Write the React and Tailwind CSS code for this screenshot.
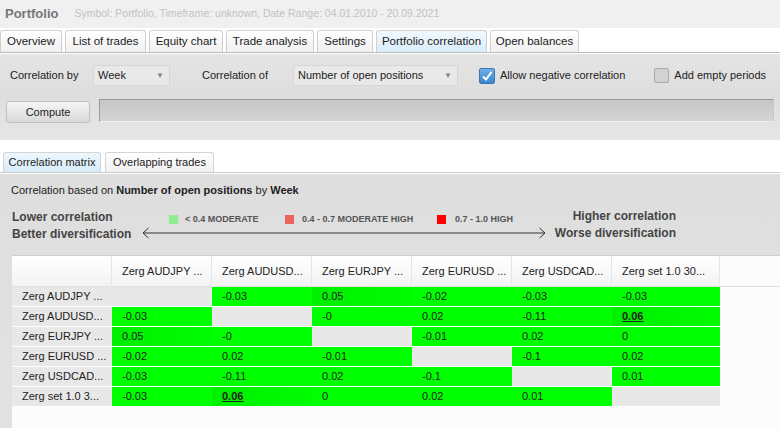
import React from 'react';

const topTabs = [
  { t: 'Overview', w: 'w-[62px]' },
  { t: 'List of trades', w: 'w-[81px]' },
  { t: 'Equity chart', w: 'w-[74px]' },
  { t: 'Trade analysis', w: 'w-[88px]' },
  { t: 'Settings', w: 'w-[56px]' },
  { t: 'Portfolio correlation', w: 'w-[111px]', active: true },
  { t: 'Open balances', w: 'w-[89px]' },
];
const names = ['Zerg AUDJPY ...', 'Zerg AUDUSD...', 'Zerg EURJPY ...', 'Zerg EURUSD ...', 'Zerg USDCAD...', 'Zerg set 1.0 30...'];
const rowNames = ['Zerg AUDJPY ...', 'Zerg AUDUSD...', 'Zerg EURJPY ...', 'Zerg EURUSD ...', 'Zerg USDCAD...', 'Zerg set 1.0 3...'];
const widths = ['w-[100px]', 'w-[100px]', 'w-[100px]', 'w-[100px]', 'w-[100px]', 'w-[108px]'];

// null = diagonal, strong = bold underlined, dim = slightly darker green
const matrix = [
  [null, { v: '-0.03' }, { v: '0.05', dim: true }, { v: '-0.02' }, { v: '-0.03' }, { v: '-0.03' }],
  [{ v: '-0.03' }, null, { v: '-0' }, { v: '0.02' }, { v: '-0.11' }, { v: '0.06', strong: true, dim: true }],
  [{ v: '0.05', dim: true }, { v: '-0' }, null, { v: '-0.01' }, { v: '0.02' }, { v: '0' }],
  [{ v: '-0.02' }, { v: '0.02' }, { v: '-0.01' }, null, { v: '-0.1' }, { v: '0.02' }],
  [{ v: '-0.03' }, { v: '-0.11' }, { v: '0.02' }, { v: '-0.1' }, null, { v: '0.01' }],
  [{ v: '-0.03' }, { v: '0.06', strong: true, dim: true }, { v: '0' }, { v: '0.02' }, { v: '0.01' }, null],
];

const Select = ({ value, width }) => (
  <div className={`${width} h-[21px] flex items-center justify-between pl-[4px] pr-[5px] bg-[#e9e9e9] border border-[#d6d6d6] text-[#222]`}>
    <span>{value}</span>
    <span className="text-[8px] text-[#888]">▼</span>
  </div>
);

const App = () => (
  <div className="w-[780px] h-[429px] overflow-hidden bg-white text-[11px] text-[#222]" style={{ fontFamily: '"Liberation Sans", Arial, sans-serif' }}>
    {/* Title */}
    <div className="h-[28px] bg-[#f0f0f0] flex items-center px-[5px] gap-[16px]">
      <span className="text-[13px] font-bold text-[#777]">Portfolio</span>
      <span className="text-[10.5px] text-[#c2c2c2]">Symbol: Portfolio, Timeframe: unknown, Date Range: 04.01.2010 - 20.09.2021</span>
    </div>

    {/* Main tabs */}
    <div className="h-[25px] flex items-end gap-[3px] border-b border-[#b8b8b8] bg-white">
      {topTabs.map(({ t, w, active }) => (
        <div key={t} className={`${w} h-[22px] flex items-center justify-center rounded-t-[3px] border border-b-0 border-[#cfcfcf] text-[11.5px] ${active ? 'bg-gradient-to-b from-[#f2f9fe] to-[#d9edfa]' : 'bg-gradient-to-b from-white to-[#f0f0f0]'} text-[#222]`}>
          {t}
        </div>
      ))}
    </div>

    {/* Controls */}
    <div className="h-[87px] bg-gradient-to-b from-[#e4e4e4] via-[#dedede] to-[#e6e6e6] border-t border-white px-[6px] pt-[11px]">
      <div className="flex items-center h-[21px]">
        <span className="w-[87px] pl-[4px]">Correlation by</span>
        <Select value="Week" width="w-[77px]" />
        <span className="ml-[32px] w-[91px]">Correlation of</span>
        <Select value="Number of open positions" width="w-[165px]" />
        <div className="ml-[21px] w-[16px] h-[16px] rounded-[2px] bg-gradient-to-b from-[#6fb0e6] to-[#3a86cc] border border-[#3b78b0] flex items-center justify-center">
          <svg width="12" height="12" viewBox="0 0 12 12"><path d="M2 6.5 L5 9.5 L10.5 2" fill="none" stroke="white" strokeWidth="2" /></svg>
        </div>
        <span className="ml-[5px]">Allow negative correlation</span>
        <div className="ml-[29px] w-[15px] h-[15px] rounded-[2px] bg-[#d2d2d2] border border-[#a8a8a8]" />
        <span className="ml-[5px]">Add empty periods</span>
      </div>
      <div className="flex items-start gap-[9px] mt-[13px]">
        <button className="w-[84px] h-[22px] mt-[2px] rounded-[3px] border border-[#c0c0c0] bg-gradient-to-b from-[#f6f6f6] to-[#d9d9d9] text-[#222] text-[11px]">Compute</button>
        <div className="flex-1 h-[23px] border border-[#9a9a9a] border-b-[#f0f0f0] border-r-[#c8c8c8] bg-gradient-to-b from-[#c6c6c6] to-[#d4d4d4]" />
      </div>
    </div>

    {/* Sub tabs */}
    <div className="h-[33px] bg-white flex items-end gap-[4px] pl-[3px] border-b border-[#c8c8c8]">
      {[{ t: 'Correlation matrix', w: 'w-[98px]' }, { t: 'Overlapping trades', w: 'w-[109px]' }].map(({ t, w }, i) => (
        <div key={t} className={`${w} h-[20px] flex items-center justify-center rounded-t-[3px] border border-b-0 border-[#d4d4d4] ${i === 0 ? 'bg-gradient-to-b from-[#eef7fd] to-[#d7ecfa]' : 'bg-gradient-to-b from-white to-[#f0f0f0]'}`}>
          {t}
        </div>
      ))}
    </div>

    {/* Matrix panel */}
    <div className="h-[255px] bg-gradient-to-b from-[#dedede] to-[#e2e2e2] border-t border-white">
      <div className="pl-[11px] pt-[8px] h-[22px]">
        Correlation based on <b>Number of open positions</b> by <b>Week</b>
      </div>

      {/* Legend */}
      <div className="flex pl-[12px] mt-[10px] h-[44px] text-[12px] font-bold text-[#444]">
        <div className="w-[130px] leading-[17px] pt-[3px]">
          <div>Lower correlation</div>
          <div>Better diversification</div>
        </div>
        <div className="w-[404px] flex flex-col">
          <div className="flex items-center pl-[27px] pt-[7px] h-[20px] text-[9px] text-[#555]">
            <div className="w-[116px] flex items-center gap-[7px]"><span className="w-[9px] h-[9px] bg-[#90ee90]" />&lt; 0.4 MODERATE</div>
            <div className="w-[152px] flex items-center gap-[8px]"><span className="w-[9px] h-[9px] bg-[#e8645c]" />0.4 - 0.7 MODERATE HIGH</div>
            <div className="flex items-center gap-[9px]"><span className="w-[9px] h-[9px] bg-[#ff0000]" />0.7 - 1.0 HIGH</div>
          </div>
          <svg width="404" height="12" viewBox="0 0 404 12" className="mt-[1px]">
            <path d="M1 6 H403" stroke="#333" strokeWidth="1" />
            <path d="M6.5 1 L1 6 L6.5 11" fill="none" stroke="#333" strokeWidth="1" />
            <path d="M397.5 1 L403 6 L397.5 11" fill="none" stroke="#333" strokeWidth="1" />
          </svg>
        </div>
        <div className="w-[130px] text-right leading-[17px] pt-[2px]">
          <div>Higher correlation</div>
          <div>Worse diversification</div>
        </div>
      </div>

      {/* Table */}
      <div className="ml-[12px] mt-[5px] h-[175px] bg-[#fcfcfc] border-t border-[#cfcfcf]">
        <div className="flex h-[31px] border-b border-[#e2e2e2]">
          <div className="w-[100px] border-r border-[#e6e6e6] bg-gradient-to-b from-white to-[#f3f3f3]" />
          {names.map((n, i) => (
            <div key={n} className={`${widths[i]} border-r border-[#e6e6e6] bg-gradient-to-b from-white to-[#f3f3f3] flex items-center pl-[10px]`}>{n}</div>
          ))}
        </div>
        {matrix.map((row, r) => (
          <div key={r} className="flex h-[20px] border-b border-white">
            <div className="w-[100px] bg-[#e8e8e8] flex items-center pl-[10px]">{rowNames[r]}</div>
            {row.map((c, i) => (
              <div key={i} className={`${widths[i]} flex items-center pl-[10px] ${c === null ? 'bg-[#e8e8e8]' : c.dim ? 'bg-gradient-to-r from-[#00f000] to-[#00fc00]' : 'bg-[#00ff00]'}`}>
                {c && (c.strong ? <b className="underline">{c.v}</b> : c.v)}
              </div>
            ))}
          </div>
        ))}
      </div>
    </div>
  </div>
);

export default App;
